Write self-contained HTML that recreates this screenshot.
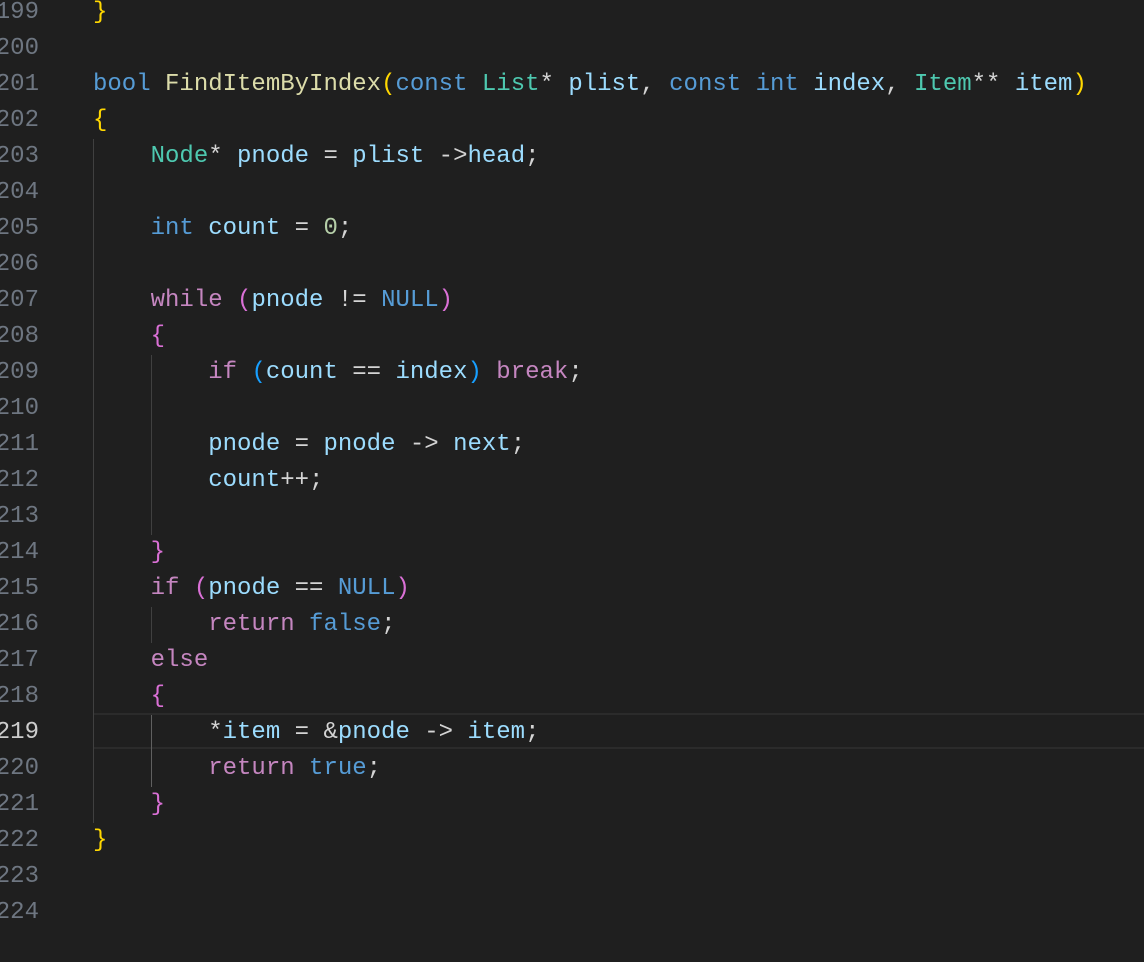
<!DOCTYPE html>
<html><head><meta charset="utf-8"><style>
html,body{margin:0;padding:0;background:#1f1f1f;width:1144px;height:962px;overflow:hidden}
#ed{position:absolute;top:-5px;left:0;font-family:"Liberation Mono",monospace;font-size:24px;color:#d4d4d4}
.l{height:36px;line-height:36px;white-space:pre;position:relative}
.n{position:absolute;left:-6px;width:45px;text-align:right;color:#6e7681}
.c{position:absolute;left:93px}
.cur .n{color:#cccccc}
.g{position:absolute;width:1px;background:#404040}
.hl{position:absolute;left:93px;right:0;top:713px;height:32px;border-top:2px solid #2b2b2b;border-bottom:2px solid #2b2b2b}
.k{color:#569cd6}.f{color:#dcdcaa}.t{color:#4ec9b0}.v{color:#9cdcfe}.p{color:#c586c0}.y{color:#ffd700}.m{color:#da70d6}.b{color:#179fff}.num{color:#b5cea8}
</style></head><body>
<div class="hl"></div>
<div class="g" style="left:93px;top:139px;height:684px"></div>
<div class="g" style="left:151px;top:355px;height:180px"></div>
<div class="g" style="left:151px;top:607px;height:36px"></div>
<div class="g" style="left:151px;top:715px;height:72px;background:#606060"></div>
<div id="ed">
<div class="l"><span class="n">199</span><span class="c"><span class="y">}</span></span></div>
<div class="l"><span class="n">200</span></div>
<div class="l"><span class="n">201</span><span class="c"><span class="k">bool</span> <span class="f">FindItemByIndex</span><span class="y">(</span><span class="k">const</span> <span class="t">List</span>* <span class="v">plist</span>, <span class="k">const</span> <span class="k">int</span> <span class="v">index</span>, <span class="t">Item</span>** <span class="v">item</span><span class="y">)</span></span></div>
<div class="l"><span class="n">202</span><span class="c"><span class="y">{</span></span></div>
<div class="l"><span class="n">203</span><span class="c">    <span class="t">Node</span>* <span class="v">pnode</span> = <span class="v">plist</span> -&gt;<span class="v">head</span>;</span></div>
<div class="l"><span class="n">204</span></div>
<div class="l"><span class="n">205</span><span class="c">    <span class="k">int</span> <span class="v">count</span> = <span class="num">0</span>;</span></div>
<div class="l"><span class="n">206</span></div>
<div class="l"><span class="n">207</span><span class="c">    <span class="p">while</span> <span class="m">(</span><span class="v">pnode</span> != <span class="k">NULL</span><span class="m">)</span></span></div>
<div class="l"><span class="n">208</span><span class="c">    <span class="m">{</span></span></div>
<div class="l"><span class="n">209</span><span class="c">        <span class="p">if</span> <span class="b">(</span><span class="v">count</span> == <span class="v">index</span><span class="b">)</span> <span class="p">break</span>;</span></div>
<div class="l"><span class="n">210</span></div>
<div class="l"><span class="n">211</span><span class="c">        <span class="v">pnode</span> = <span class="v">pnode</span> -&gt; <span class="v">next</span>;</span></div>
<div class="l"><span class="n">212</span><span class="c">        <span class="v">count</span>++;</span></div>
<div class="l"><span class="n">213</span></div>
<div class="l"><span class="n">214</span><span class="c">    <span class="m">}</span></span></div>
<div class="l"><span class="n">215</span><span class="c">    <span class="p">if</span> <span class="m">(</span><span class="v">pnode</span> == <span class="k">NULL</span><span class="m">)</span></span></div>
<div class="l"><span class="n">216</span><span class="c">        <span class="p">return</span> <span class="k">false</span>;</span></div>
<div class="l"><span class="n">217</span><span class="c">    <span class="p">else</span></span></div>
<div class="l"><span class="n">218</span><span class="c">    <span class="m">{</span></span></div>
<div class="l cur"><span class="n">219</span><span class="c">        *<span class="v">item</span> = &amp;<span class="v">pnode</span> -&gt; <span class="v">item</span>;</span></div>
<div class="l"><span class="n">220</span><span class="c">        <span class="p">return</span> <span class="k">true</span>;</span></div>
<div class="l"><span class="n">221</span><span class="c">    <span class="m">}</span></span></div>
<div class="l"><span class="n">222</span><span class="c"><span class="y">}</span></span></div>
<div class="l"><span class="n">223</span></div>
<div class="l"><span class="n">224</span></div>
</div>
</body></html>
